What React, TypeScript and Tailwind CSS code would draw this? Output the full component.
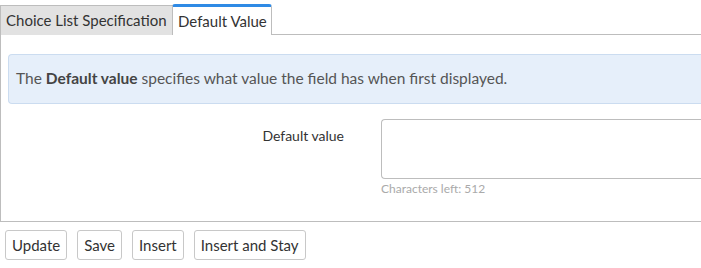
import React from "react";

export default function App() {
  const font = { fontFamily: "Lato, 'Open Sans', sans-serif" };
  return (
    <div className="w-[701px] h-[268px] overflow-hidden bg-white text-[#333]" style={font}>
      <div className="pt-[4px]">
        <div className="flex items-end h-[31px]">
          <div className="h-[30px] w-[173px] bg-[#e2e2e2] border border-[#bdbdbd] border-b-0 flex items-center pl-[5px] text-[15px] text-[#333]">
            Choice List Specification
          </div>
          <div className="h-[31px] w-[100px] bg-white border-x border-[#bdbdbd] border-t-[3px] border-t-[#2f8ae5] rounded-t-[3px] flex items-center pl-[5px] text-[15px] text-[#333] -ml-px">
            Default Value
          </div>
          <div className="flex-1 border-b border-[#bdbdbd]" />
        </div>
        <div className="border-l border-b border-[#bdbdbd] h-[187px] pl-[7px] pt-[19px]">
          <div className="h-[50px] bg-[#e6effa] border border-[#cbdcf0] rounded-l-[4px] border-r-0 flex items-center pl-[7px] text-[15.5px] text-[#555]">
            <span>
              The <b className="font-bold text-[#444]">Default value</b> specifies what value the field has when first displayed.
            </span>
          </div>
          <div className="flex mt-[15px]">
            <div className="w-[336px] text-right text-[14px] text-[#333] pt-[6px]">Default value</div>
            <div className="ml-[37px] flex-1 flex flex-col">
              <div className="h-[60px] border border-[#bdbdbd] border-r-0 rounded-l-[4px] bg-white" />
              <div className="text-[12px] text-[#aaa] mt-[1px]">Characters left: 512</div>
            </div>
          </div>
        </div>
        <div className="flex gap-[10px] pl-[5px] pt-[8px]">
          {["Update", "Save", "Insert", "Insert and Stay"].map((b) => (
            <button key={b} className="h-[30px] px-[6px] border border-[#c8c8c8] rounded-[3px] bg-white text-[15px] text-[#333]" style={font}>
              {b}
            </button>
          ))}
        </div>
      </div>
    </div>
  );
}
